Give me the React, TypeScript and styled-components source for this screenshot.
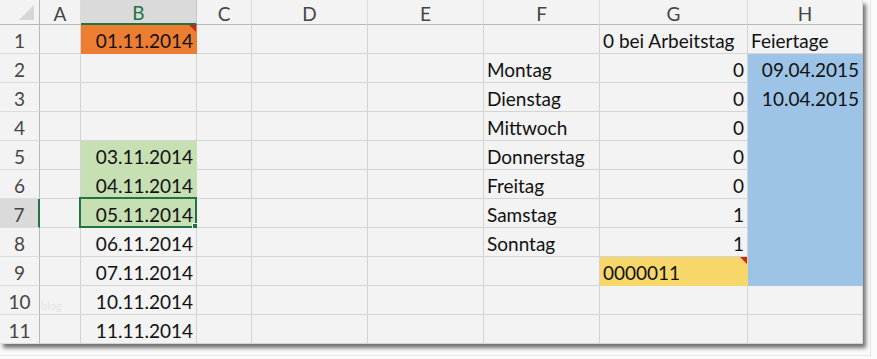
import React from 'react';
import styled, { createGlobalStyle, css } from 'styled-components';

const GlobalStyle = createGlobalStyle`
  body {
    margin: 0;
    background: #fbfbfb;
    font-family: Lato, "Liberation Sans", sans-serif;
  }
`;

const COLS = ['A', 'B', 'C', 'D', 'E', 'F', 'G', 'H'];
const COL_WIDTHS = [41, 116, 55, 116, 116, 116, 148, 115];
const ROW_COUNT = 11;

const GREEN = '#217346';

type Fill = 'orange' | 'green' | 'blue' | 'yellow';

const FILLS: Record<Fill, string> = {
  orange: '#ed7d31',
  green: '#c6dfb3',
  blue: '#9dc3e6',
  yellow: '#f7d66a',
};

type CellData = {
  text?: string;
  align?: 'left' | 'right';
  fill?: Fill;
  comment?: boolean;
};

const cells: Record<string, CellData> = {
  B1: { text: '01.11.2014', align: 'right', fill: 'orange', comment: true },
  B5: { text: '03.11.2014', align: 'right', fill: 'green' },
  B6: { text: '04.11.2014', align: 'right', fill: 'green' },
  B7: { text: '05.11.2014', align: 'right', fill: 'green' },
  B8: { text: '06.11.2014', align: 'right' },
  B9: { text: '07.11.2014', align: 'right' },
  B10: { text: '10.11.2014', align: 'right' },
  B11: { text: '11.11.2014', align: 'right' },
  F2: { text: 'Montag' },
  F3: { text: 'Dienstag' },
  F4: { text: 'Mittwoch' },
  F5: { text: 'Donnerstag' },
  F6: { text: 'Freitag' },
  F7: { text: 'Samstag' },
  F8: { text: 'Sonntag' },
  G1: { text: '0 bei Arbeitstag' },
  G2: { text: '0', align: 'right' },
  G3: { text: '0', align: 'right' },
  G4: { text: '0', align: 'right' },
  G5: { text: '0', align: 'right' },
  G6: { text: '0', align: 'right' },
  G7: { text: '1', align: 'right' },
  G8: { text: '1', align: 'right' },
  G9: { text: '0000011', fill: 'yellow', comment: true },
  H1: { text: 'Feiertage' },
  H2: { text: '09.04.2015', align: 'right', fill: 'blue' },
  H3: { text: '10.04.2015', align: 'right', fill: 'blue' },
  H4: { fill: 'blue' },
  H5: { fill: 'blue' },
  H6: { fill: 'blue' },
  H7: { fill: 'blue' },
  H8: { fill: 'blue' },
  H9: { fill: 'blue' },
};

const ACTIVE_COL = 'B';
const ACTIVE_ROW = 7;

const Page = styled.div`
  width: 870px;
  height: 355px;
  border-right: 1px solid #e6e6e6;
  border-bottom: 1px solid #e6e6e6;
`;

const Sheet = styled.div`
  display: grid;
  grid-template-columns: 40px ${COL_WIDTHS.map((w) => `${w}px`).join(' ')};
  grid-template-rows: 25px repeat(${ROW_COUNT}, 29px);
  width: max-content;
  background: #f3f3f3;
  box-shadow: 3px 4px 4px rgba(0, 0, 0, 0.55);
`;

const Corner = styled.div`
  position: relative;
  background: #f3f3f3;
  border-right: 1px solid #b8b8b8;
  border-bottom: 1px solid #b8b8b8;

  &::after {
    content: '';
    position: absolute;
    right: 5px;
    bottom: 4px;
    border-style: solid;
    border-width: 0 0 15px 15px;
    border-color: transparent transparent #d6d6d6 transparent;
  }
`;

const ColHeader = styled.div<{ $active?: boolean }>`
  box-sizing: border-box;
  display: flex;
  align-items: center;
  justify-content: center;
  padding-top: 2px;
  font-size: 19px;
  color: #454545;
  background: #f3f3f3;
  border-right: 1px solid #dcdcdc;
  border-bottom: 1px solid #b8b8b8;

  ${(p) =>
    p.$active &&
    css`
      background: #dadada;
      color: ${GREEN};
      border-bottom: 2px solid ${GREEN};
      border-right-color: #c6c6c6;
    `}
`;

const RowHeader = styled.div<{ $active?: boolean }>`
  box-sizing: border-box;
  display: flex;
  align-items: flex-end;
  justify-content: center;
  padding-bottom: 1px;
  font-size: 19px;
  color: #454545;
  background: #f3f3f3;
  border-right: 1px solid #b8b8b8;
  border-bottom: 1px solid #dcdcdc;

  ${(p) =>
    p.$active &&
    css`
      background: #dadada;
      border-right: 2px solid ${GREEN};
    `}
`;

const Cell = styled.div<{ $fill?: Fill; $align?: 'left' | 'right'; $comment?: boolean }>`
  box-sizing: border-box;
  position: relative;
  display: flex;
  align-items: flex-end;
  justify-content: ${(p) => (p.$align === 'right' ? 'flex-end' : 'flex-start')};
  padding: 0 3px 1px 3px;
  font-size: 19px;
  color: #111;
  white-space: nowrap;
  background: ${(p) => (p.$fill ? FILLS[p.$fill] : '#f3f3f3')};
  border-right: 1px solid ${(p) => (p.$fill ? FILLS[p.$fill] : '#d4d4d4')};
  border-bottom: 1px solid ${(p) => (p.$fill ? FILLS[p.$fill] : '#d4d4d4')};

  ${(p) =>
    p.$comment &&
    css`
      &::before {
        content: '';
        position: absolute;
        top: 0;
        right: 0;
        border-style: solid;
        border-width: 0 7px 7px 0;
        border-color: transparent #c8281c transparent transparent;
      }
    `}
`;

const Selection = styled.div`
  position: absolute;
  left: -2px;
  top: -2px;
  right: -1px;
  bottom: -1px;
  border: 2px solid ${GREEN};
  pointer-events: none;

  &::after {
    content: '';
    position: absolute;
    right: -4px;
    bottom: -4px;
    width: 5px;
    height: 5px;
    background: ${GREEN};
    border: 1px solid #f3f3f3;
  }
`;

const Watermark = styled.span`
  position: absolute;
  left: 1px;
  bottom: 2px;
  font-size: 11px;
  color: #e4e4e4;
`;

const App: React.FC = () => {
  const rows = Array.from({ length: ROW_COUNT }, (_, i) => i + 1);
  return (
    <Page>
      <GlobalStyle />
      <Sheet>
        <Corner />
        {COLS.map((c) => (
          <ColHeader key={c} $active={c === ACTIVE_COL}>
            {c}
          </ColHeader>
        ))}
        {rows.map((r) => (
          <React.Fragment key={r}>
            <RowHeader $active={r === ACTIVE_ROW}>{r}</RowHeader>
            {COLS.map((c) => {
              const ref = `${c}${r}`;
              const data = cells[ref] || {};
              const selected = c === ACTIVE_COL && r === ACTIVE_ROW;
              return (
                <Cell key={ref} $fill={data.fill} $align={data.align} $comment={data.comment}>
                  {data.text}
                  {ref === 'A10' && <Watermark>blog</Watermark>}
                  {selected && <Selection />}
                </Cell>
              );
            })}
          </React.Fragment>
        ))}
      </Sheet>
    </Page>
  );
};

export default App;
